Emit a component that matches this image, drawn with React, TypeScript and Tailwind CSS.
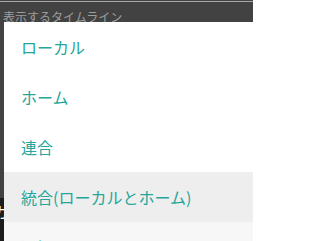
import React from "react";

const items = [
  { label: "ローカル", bg: "bg-white" },
  { label: "ホーム", bg: "bg-white" },
  { label: "連合", bg: "bg-white" },
  { label: "統合(ローカルとホーム)", bg: "bg-[#eeeeee]" },
  { label: "通知", bg: "bg-[#f7f7f7]" },
];

export default function App() {
  return (
    <div
      className="relative w-[253px] h-[241px] overflow-hidden bg-[#424242]"
      style={{ fontFamily: '"Noto Sans CJK JP", "Noto Sans", sans-serif' }}
    >
      <div className="pt-px">
        <div className="h-px bg-[#a8a8a8]" />
      </div>
      <div className="pl-[3px] pt-[8px] text-[12px] leading-[14px] text-[#9e9e9e] whitespace-nowrap">
        表示するタイムライン
      </div>
      <div className="mt-[174px] h-[60px] bg-[#1c1c1c] overflow-hidden">
        <div className="ml-[-7px] pt-[4px] text-[15px] leading-[20px] text-white whitespace-nowrap">
          カ
        </div>
      </div>

      <ul className="absolute top-[22px] left-[4px] right-0 bg-white">
        {items.map((it) => (
          <li
            key={it.label}
            className={`${it.bg} h-[50px] flex items-center pl-[17px] pr-4 pb-px text-[16px] leading-[22px] text-[#26a69a] whitespace-nowrap`}
          >
            {it.label}
          </li>
        ))}
      </ul>
    </div>
  );
}
